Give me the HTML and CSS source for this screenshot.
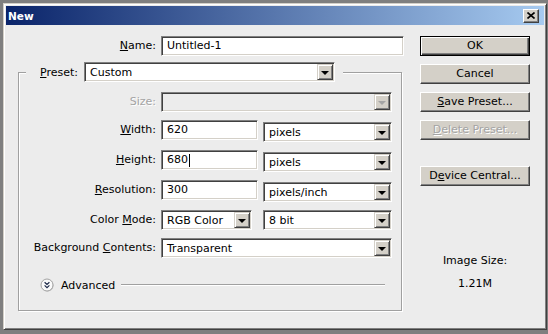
FILE: index.html
```html
<html>
    <head>
        <title>New</title>
        <link rel="stylesheet" href="styles.css">
    </head>
    <body>
        <div class="window">
            <div class="titlebar">
                <span class="title">New</span>
                <span class="close">
                    <svg width="8" height="7" viewBox="0 0 8 7"><path d="M0.5 0.5 L7.5 6.5 M7.5 0.5 L0.5 6.5" stroke="#000" stroke-width="1.6"/></svg>
                </span>
            </div>
            <div class="content">
                <div class="main">
                    <div class="row name-row">
                        <span class="lbl wide"><u>N</u>ame:</span>
                        <div class="field name-field">Untitled-1</div>
                    </div>
                    <fieldset class="group">
                        <legend>
                            <span class="preset-lbl"><u>P</u>reset:</span>
                            <div class="select preset-select"><span class="val">Custom</span><span class="drop"></span></div>
                        </legend>
                        <div class="rows">
                            <div class="row">
                                <span class="lbl disabled">Size:</span>
                                <div class="select disabled full"><span class="val"></span><span class="drop"></span></div>
                            </div>
                            <div class="row">
                                <span class="lbl"><u>W</u>idth:</span>
                                <div class="field num">620</div>
                                <div class="select unit low"><span class="val">pixels</span><span class="drop"></span></div>
                            </div>
                            <div class="row">
                                <span class="lbl"><u>H</u>eight:</span>
                                <div class="field num">680<span class="caret"></span></div>
                                <div class="select unit low"><span class="val">pixels</span><span class="drop"></span></div>
                            </div>
                            <div class="row">
                                <span class="lbl"><u>R</u>esolution:</span>
                                <div class="field num">300</div>
                                <div class="select unit low"><span class="val">pixels/inch</span><span class="drop"></span></div>
                            </div>
                            <div class="row">
                                <span class="lbl">Color <u>M</u>ode:</span>
                                <div class="select mode"><span class="val">RGB Color</span><span class="drop"></span></div>
                                <div class="select unit bits"><span class="val">8 bit</span><span class="drop"></span></div>
                            </div>
                            <div class="row">
                                <span class="lbl">Background <u>C</u>ontents:</span>
                                <div class="select full"><span class="val">Transparent</span><span class="drop"></span></div>
                            </div>
                            <div class="advanced">
                                <svg width="14" height="14" viewBox="0 0 14 14">
                                    <circle cx="7.5" cy="7.5" r="6" fill="#b8b8b8"/>
                                    <circle cx="7" cy="7" r="6" fill="#fafafa" stroke="#a4a4a4"/>
                                    <path d="M4.6 4.2 L7 6.4 L9.4 4.2 M4.6 7.4 L7 9.6 L9.4 7.4" fill="none" stroke="#1d2a4a" stroke-width="1.2"/>
                                </svg>
                                <span class="adv-text">Advanced</span>
                                <span class="adv-line"></span>
                            </div>
                        </div>
                    </fieldset>
                </div>
                <div class="side">
                    <div class="btn default">OK</div>
                    <div class="btn">Cancel</div>
                    <div class="btn"><u>S</u>ave Preset...</div>
                    <div class="btn disabled"><u>D</u>elete Preset...</div>
                    <div class="btn device">D<u>e</u>vice Central...</div>
                    <div class="imgsize">Image Size:<br>1.21M</div>
                </div>
            </div>
        </div>
    </body>
</html>
```
FILE: styles.css
```css
* {
    font-family: 'DejaVu Sans', Verdana, sans-serif;
}
html, body {
    margin: 0;
    background-color: #7f7f7f;
}
body {
    font-size: 11px;
    color: #000;
}
u {
    text-decoration: underline;
    text-underline-offset: 1px;
}
.window {
    box-sizing: border-box;
    width: 544px;
    height: 327px;
    margin: 3px 1px 0 3px;
    padding: 2px;
    background-color: #ececec;
    border: 1px solid;
    border-color: #d4d0c8 #404040 #404040 #d4d0c8;
    box-shadow: inset 1px 1px #fff, inset -1px -1px #808080;
}
.titlebar {
    height: 19px;
    display: flex;
    align-items: center;
    justify-content: space-between;
    padding: 0 5px 0 2px;
    background: linear-gradient(to right, #0a246a, #a6caf0);
}
.title {
    color: #fff;
    font-weight: bold;
    font-size: 10.5px;
}
.close {
    box-sizing: border-box;
    width: 16px;
    height: 14px;
    display: flex;
    align-items: center;
    justify-content: center;
    background-color: #d4d0c8;
    border: 1px solid;
    border-color: #fff #404040 #404040 #fff;
    box-shadow: inset -1px -1px #808080;
}
.content {
    display: flex;
    padding: 11px 0 0 12px;
}
.main {
    width: 386px;
}
.row {
    display: flex;
    align-items: flex-start;
}
.lbl {
    width: 137px;
    margin-right: 5px;
    text-align: right;
    line-height: 20px;
    white-space: nowrap;
}
.lbl.wide {
    width: 138px;
}
.disabled {
    color: #a4a4a4;
    text-shadow: 1px 1px 0 #fff;
}
.field, .select {
    box-sizing: border-box;
    height: 20px;
    border: 1px solid;
    border-color: #808080 #fff #fff #808080;
    box-shadow: inset 1px 1px #404040, inset -1px -1px #d4d0c8;
    background-color: #fff;
}
.field {
    padding: 0 4px 0 5px;
    line-height: 18px;
    white-space: nowrap;
}
.name-field {
    width: 243px;
}
.num {
    width: 97px;
    display: flex;
    align-items: center;
}
.caret {
    display: inline-block;
    width: 1px;
    height: 13px;
    margin-left: 1px;
    background-color: #000;
}
.select {
    display: flex;
    padding: 1px;
}
.select .val {
    flex: 1;
    padding-left: 4px;
    line-height: 17px;
    white-space: nowrap;
}
.select.disabled {
    background-color: #ececec;
}
.drop {
    box-sizing: border-box;
    width: 16px;
    height: 16px;
    display: flex;
    align-items: center;
    justify-content: center;
    background-color: #d4d0c8;
    border: 1px solid;
    border-color: #d4d0c8 #404040 #404040 #d4d0c8;
    box-shadow: inset 1px 1px #fff, inset -1px -1px #808080;
}
.drop::after {
    content: '';
    border-left: 4px solid transparent;
    border-right: 4px solid transparent;
    border-top: 4px solid #000;
    margin-top: 1px;
}
.select.disabled .drop::after {
    border-top-color: #a4a4a4;
}
.preset-select {
    width: 251px;
}
.full {
    width: 231px;
}
.unit {
    width: 129px;
    margin-left: 5px;
}
.low {
    margin-top: 2px;
}
.mode {
    width: 91px;
}
.bits {
    margin-left: 11px;
}
.group {
    box-sizing: border-box;
    width: 384px;
    margin: 6px 0 0 0;
    padding: 10px 0 18px 0;
    border: 1px solid #a0a0a0;
    box-shadow: 1px 1px 0 #fff, inset 1px 1px 0 #fff;
}
.group legend {
    display: flex;
    align-items: center;
    margin-left: 7px;
    padding: 0 8px 0 14px;
    background-color: #ececec;
}
.preset-lbl {
    margin-right: 6px;
}
.rows {
    display: flex;
    flex-direction: column;
    gap: 8px;
}
.advanced {
    display: flex;
    align-items: center;
    height: 14px;
    margin: 12px 16px 0 21px;
}
.adv-text {
    margin: 0 6px 0 7px;
}
.adv-line {
    flex: 1;
    border-top: 1px solid #a0a0a0;
    border-bottom: 1px solid #fff;
}
.side {
    width: 110px;
    margin-left: 16px;
    display: flex;
    flex-direction: column;
    gap: 8px;
}
.btn {
    box-sizing: border-box;
    height: 20px;
    line-height: 17px;
    text-align: center;
    background-color: #d4d0c8;
    border: 1px solid;
    border-color: #fff #404040 #404040 #fff;
    box-shadow: inset -1px -1px #808080;
    white-space: nowrap;
}
.btn.default {
    border-color: #000;
    line-height: 18px;
    box-shadow: inset 1px 1px #fff, inset -1px -1px #404040, inset -2px -2px #808080;
}
.btn.device {
    margin-top: 18px;
}
.imgsize {
    margin-top: 55px;
    text-align: center;
    line-height: 23px;
}
```
